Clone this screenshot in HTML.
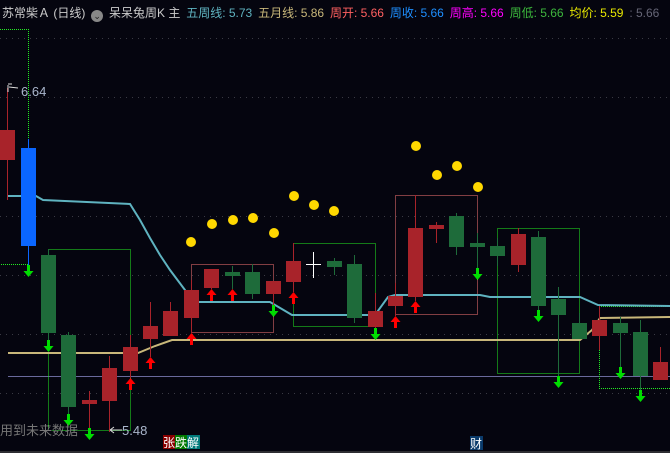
<!DOCTYPE html>
<html><head><meta charset="utf-8"><style>
html,body{margin:0;padding:0;background:#05050f;overflow:hidden}
#h{position:absolute;left:2px;top:4px;font:12px "Liberation Sans","Noto Sans CJK SC",sans-serif;white-space:nowrap;color:#ccc;letter-spacing:0}
#h span{margin-right:2.5px}
</style></head><body>
<svg width="670" height="453" style="position:absolute;left:0;top:0" xmlns="http://www.w3.org/2000/svg">
<rect width="670" height="453" fill="#05050f"/>
<g stroke="#3a3a44" stroke-dasharray="1,5" stroke-width="1">
<line x1="0" y1="38.5" x2="670" y2="38.5"/><line x1="0" y1="97.5" x2="670" y2="97.5"/>
<line x1="0" y1="216.5" x2="670" y2="216.5"/><line x1="0" y1="275.5" x2="670" y2="275.5"/>
<line x1="0" y1="334.5" x2="670" y2="334.5"/><line x1="0" y1="393.5" x2="670" y2="393.5"/>
</g>
<line x1="8" y1="376.5" x2="670" y2="376.5" stroke="#6a6a9c"/>
<line x1="0" y1="452" x2="670" y2="452" stroke="#555"/>
<g fill="none" stroke-dasharray="1,1" stroke-width="1">
<polyline points="0,29.5 28.5,29.5 28.5,264.5 0,264.5" stroke="#22ee22"/>
<rect x="48.5" y="249.5" width="82" height="181" stroke="#22ee22"/>
<rect x="191.5" y="264.5" width="82" height="68" stroke="#ff7777"/>
<rect x="293.5" y="243.5" width="82" height="83" stroke="#22ee22"/>
<rect x="395.5" y="195.5" width="82" height="119" stroke="#ff7777"/>
<rect x="497.5" y="228.5" width="82" height="145" stroke="#22ee22"/>
<polyline points="670,306.5 599.5,306.5 599.5,388.5 670,388.5" stroke="#22ee22"/>
</g>
<polyline fill="none" stroke="#5fb3c0" stroke-width="2" points="8,196 36,196 43,200 130,204 140,220 150,238 160,255 170,270 185,290 190,302 270,302 292,315 375,315 388,297 395,295 480,295 490,297 580,297 598,305 670,306"/>
<polyline fill="none" stroke="#c8b77a" stroke-width="2" points="8,353 138,353 155,346 172,340 580,340 592,330 600,318 670,317"/>
<g stroke-width="1">
<g stroke="#a8232a">
<line x1="7.5" y1="88" x2="7.5" y2="200"/><line x1="89.5" y1="391" x2="89.5" y2="432"/><line x1="109.5" y1="356" x2="109.5" y2="432"/>
<line x1="130.5" y1="335" x2="130.5" y2="378"/><line x1="150.5" y1="302" x2="150.5" y2="357"/><line x1="170.5" y1="302" x2="170.5" y2="336"/>
<line x1="191.5" y1="280" x2="191.5" y2="333"/><line x1="211.5" y1="269" x2="211.5" y2="289"/><line x1="273.5" y1="281" x2="273.5" y2="305"/>
<line x1="293.5" y1="243" x2="293.5" y2="292"/><line x1="375.5" y1="293" x2="375.5" y2="328"/><line x1="395.5" y1="283" x2="395.5" y2="316"/>
<line x1="415.5" y1="195" x2="415.5" y2="301"/><line x1="436.5" y1="222" x2="436.5" y2="243"/><line x1="518.5" y1="228" x2="518.5" y2="272"/>
<line x1="599.5" y1="306" x2="599.5" y2="350"/><line x1="660.5" y1="347" x2="660.5" y2="380"/>
</g>
<g stroke="#1e6b3a">
<line x1="48.5" y1="249" x2="48.5" y2="340"/><line x1="68.5" y1="332" x2="68.5" y2="414"/><line x1="232.5" y1="266" x2="232.5" y2="289"/>
<line x1="252.5" y1="264" x2="252.5" y2="299"/><line x1="334.5" y1="258" x2="334.5" y2="275"/><line x1="354.5" y1="255" x2="354.5" y2="323"/>
<line x1="456.5" y1="213" x2="456.5" y2="255"/><line x1="477.5" y1="233" x2="477.5" y2="268"/><line x1="497.5" y1="238" x2="497.5" y2="266"/>
<line x1="538.5" y1="231" x2="538.5" y2="310"/><line x1="558.5" y1="287" x2="558.5" y2="376"/><line x1="579.5" y1="313" x2="579.5" y2="339"/>
<line x1="620.5" y1="317" x2="620.5" y2="367"/><line x1="640.5" y1="320" x2="640.5" y2="390"/>
</g>
<line x1="28.5" y1="139" x2="28.5" y2="265" stroke="#0a66ff"/>
<g fill="#a8232a">
<rect x="0" y="130" width="15" height="30"/><rect x="82" y="400" width="15" height="4"/><rect x="102" y="368" width="15" height="33"/>
<rect x="123" y="347" width="15" height="24"/><rect x="143" y="326" width="15" height="13"/><rect x="163" y="311" width="15" height="25"/>
<rect x="184" y="290" width="15" height="28"/><rect x="204" y="269" width="15" height="19"/><rect x="266" y="281" width="15" height="13"/>
<rect x="286" y="261" width="15" height="21"/><rect x="368" y="311" width="15" height="16"/><rect x="388" y="296" width="15" height="10"/>
<rect x="408" y="228" width="15" height="69"/><rect x="429" y="225" width="15" height="4"/><rect x="511" y="234" width="15" height="31"/>
<rect x="592" y="320" width="15" height="16"/><rect x="653" y="362" width="15" height="18"/>
</g>
<g fill="#1e6b3a">
<rect x="41" y="255" width="15" height="78"/><rect x="61" y="335" width="15" height="72"/><rect x="225" y="272" width="15" height="4"/>
<rect x="245" y="272" width="15" height="22"/><rect x="327" y="261" width="15" height="6"/><rect x="347" y="264" width="15" height="54"/>
<rect x="449" y="216" width="15" height="31"/><rect x="470" y="243" width="15" height="4"/><rect x="490" y="246" width="15" height="10"/>
<rect x="531" y="237" width="15" height="69"/><rect x="551" y="299" width="15" height="16"/><rect x="572" y="323" width="15" height="16"/>
<rect x="613" y="323" width="15" height="10"/><rect x="633" y="332" width="15" height="44"/>
</g>
<rect x="21" y="148" width="15" height="98" fill="#0a66ff"/>
</g>
<defs>
<g id="dn"><rect x="-1.5" y="0" width="3" height="7" fill="#00dd00"/><polygon points="-5,6 5,6 0,12" fill="#00dd00"/></g>
<g id="up"><polygon points="-5,6 5,6 0,0" fill="#ff0000"/><rect x="-1.5" y="5" width="3" height="7" fill="#ff0000"/></g>
</defs>
<use href="#dn" x="28.5" y="265"/><use href="#dn" x="48.5" y="340"/><use href="#dn" x="68.5" y="414"/><use href="#dn" x="89.5" y="428"/>
<use href="#dn" x="273.5" y="305"/><use href="#dn" x="375.5" y="328"/><use href="#dn" x="477.5" y="268"/><use href="#dn" x="538.5" y="310"/>
<use href="#dn" x="558.5" y="376"/><use href="#dn" x="620.5" y="367"/><use href="#dn" x="640.5" y="390"/>
<use href="#up" x="130.5" y="378"/><use href="#up" x="150.5" y="357"/><use href="#up" x="191.5" y="333"/><use href="#up" x="211.5" y="289"/>
<use href="#up" x="232.5" y="289"/><use href="#up" x="293.5" y="292"/><use href="#up" x="395.5" y="316"/><use href="#up" x="415.5" y="301"/>
<g fill="#ffd800">
<circle cx="191" cy="242" r="5"/><circle cx="212" cy="224" r="5"/><circle cx="233" cy="220" r="5"/><circle cx="253" cy="218" r="5"/>
<circle cx="274" cy="233" r="5"/><circle cx="294" cy="196" r="5"/><circle cx="314" cy="205" r="5"/><circle cx="334" cy="211" r="5"/>
<circle cx="416" cy="146" r="5"/><circle cx="437" cy="175" r="5"/><circle cx="457" cy="166" r="5"/><circle cx="478" cy="187" r="5"/>
</g>
<g stroke="#fff" stroke-width="1"><line x1="306" y1="264.5" x2="321" y2="264.5"/><line x1="313.5" y1="252" x2="313.5" y2="278"/></g>
<path d="M8,85 L8,92 M8,84 L12,84 M9,87 L18,88" stroke="#ddd" fill="none"/>
<text x="21" y="96" fill="#aab6cc" font-family="Liberation Sans" font-size="13">6.64</text>
<path d="M110,430 L122,430 M110,430 L114,427 M110,430 L114,433" stroke="#ddd" fill="none"/>
<text x="122" y="435" fill="#aab6cc" font-family="Liberation Sans" font-size="13">5.48</text>
<text x="0" y="435" fill="#777" font-family="Liberation Sans,Noto Sans CJK SC,sans-serif" font-size="13">用到未来数据</text>
<rect x="163" y="435" width="12" height="14" fill="#8a0000"/><rect x="175" y="435" width="12" height="14" fill="#007a00"/><rect x="187" y="435" width="13" height="14" fill="#007a7a"/>
<text x="163" y="447" fill="#fff" font-family="Noto Sans CJK SC,sans-serif" font-size="12">张跌解</text>
<rect x="470" y="436" width="13" height="14" fill="#0a3a6a"/>
<text x="470" y="448" fill="#fff" font-family="Noto Sans CJK SC,sans-serif" font-size="12">财</text>
</svg>
<div id="h"><span style="color:#ccc">苏常柴Ａ (日线)</span> <span style="display:inline-block;width:12px;height:12px;border-radius:6px;background:#888;vertical-align:-2px;color:#222;font-size:9px;text-align:center;line-height:12px">⌄</span> <span style="color:#ccc">呆呆兔周K 主</span> <span style="color:#5fb3c0">五周线: 5.73</span> <span style="color:#c8b77a">五月线: 5.86</span> <span style="color:#ff6060">周开: 5.66</span> <span style="color:#1e8fff">周收: 5.66</span> <span style="color:#ff00ff">周高: 5.66</span> <span style="color:#3cb83c">周低: 5.66</span> <span style="color:#e8e800">均价: 5.59</span><span style="color:#667"> : 5.66</span></div>
</body></html>
